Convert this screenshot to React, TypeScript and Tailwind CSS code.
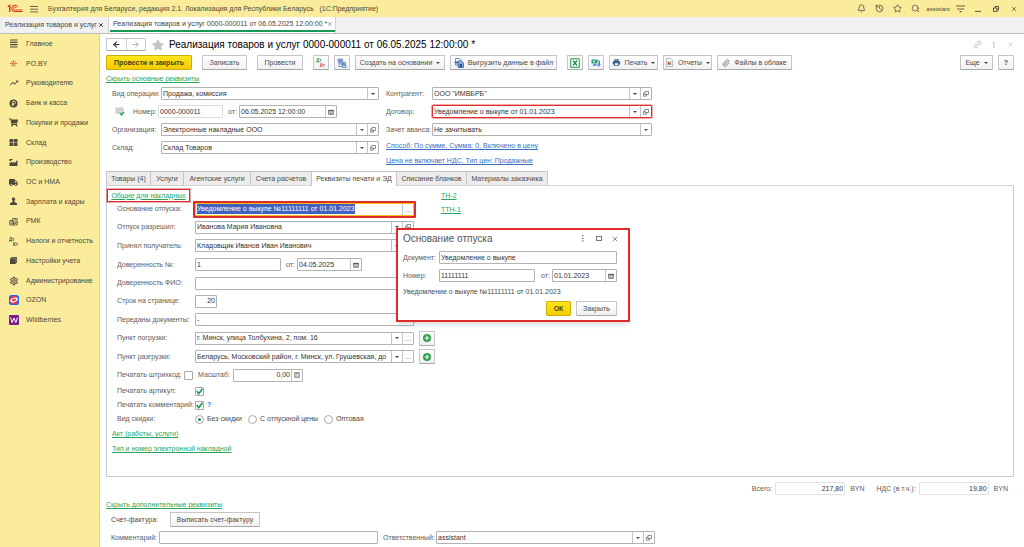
import { useEffect, useId, useRef } from "react";
import type { ReactNode } from "react";
import { ArrowLeft, ArrowRight, Bell, History, Link2, Paperclip, Search, Star, X } from "lucide-react";
import { FaShoppingCart, FaStar, FaTruck } from "react-icons/fa";
import { MdOutlineSettings, MdPrint, MdTrendingUp } from "react-icons/md";

/* ---------- icons ---------- */

const LogoIcon = () => (
  <svg viewBox="0 0 32 18" className="h-[9px] w-4" fill="none" stroke="#d9291c">
    <path d="M1.500 5.500L5.500 3V16" strokeWidth="2.600" />
    <path d="M21.500 6.500A6.300 6.300 0 1 0 16 15H31" strokeWidth="2" />
    <path d="M18.500 8A3 3 0 1 0 16 11.800H31" strokeWidth="1.600" />
  </svg>
);

const LinesIcon = () => (
  <svg viewBox="0 0 9 9" className="size-[9px]" fill="#4d4a3c">
    <path d="M1 0.5h7.5v1.1H1zM1 2.8h7.5v1.1H1zM1 5.1h7.5v1.1H1zM1 7.4h7.5v1.1H1z" />
  </svg>
);

const SparkIcon = () => (
  <svg viewBox="0 0 18 18" className="size-[9px]" stroke="#e4573d" strokeWidth="1.600" fill="#e4573d">
    <path d="M9 7V2M9 11v5M7 9H1.500M11 9h5.500M7.500 7.500L4 4M10.500 7.500L14 4M7.500 10.500L4 14M10.500 10.500L14 14" />
    <circle cx="9" cy="9" r="1.200" />
  </svg>
);

const RubleIcon = () => (
  <svg viewBox="0 0 18 18" className="size-[9px]">
    <circle cx="9" cy="9" r="8" fill="#4d4a3c" />
    <path d="M7.5 14V4.5h2.7a2.6 2.6 0 0 1 0 5.3H5.5M5.5 12h4.5" stroke="#faec9b" strokeWidth="1.6" fill="none" />
  </svg>
);

const BoxesIcon = () => (
  <svg viewBox="0 0 18 18" className="size-[9px]" fill="#4d4a3c">
    <path d="M1 2h7.4v6.4H1zM9.6 2H17v6.4H9.6zM1 9.6h7.4V16H1zM9.6 9.6H17V16H9.6z" />
  </svg>
);

const PlantIcon = () => (
  <svg viewBox="0 0 18 18" className="size-[9px]" fill="#4d4a3c">
    <path d="M1 16V10l5-3v3l5-3v3l3-2 1-3h2v11z" />
    <path d="M1 2h6v1.800H4.500V6H1z" />
  </svg>
);

const PersonIcon = () => (
  <svg viewBox="0 0 18 18" className="size-[9px]" fill="#4d4a3c">
    <path d="M9 1a3.400 3.400 0 0 1 2 6.200V10l5 2.600V16H2v-3.400L7 10V7.200A3.400 3.400 0 0 1 9 1z" />
  </svg>
);

const CashIcon = () => (
  <svg viewBox="0 0 18 18" className="size-[9px]" fill="none" stroke="#4d4a3c" strokeWidth="1.600">
    <path d="M1.500 7h7v9h-7zM8.500 10h8v6h-8zM7 7V3h9v7" />
    <path d="M3 9.500h4M3 12.500h4M10 5.500h4M10.500 13h4" />
  </svg>
);

const DebitIcon = ({ top, bottom }: { top: string; bottom: string }) => (
  <svg viewBox="0 0 20 18" className="h-[9px] w-[10px]">
    <text x="0" y="8" fontSize="9" fontFamily="Liberation Sans" fontWeight="bold" fill={top}>Дт</text>
    <text x="8" y="17" fontSize="9" fontFamily="Liberation Sans" fontWeight="bold" fill={bottom}>Кт</text>
  </svg>
);

const BooksIcon = () => (
  <svg viewBox="0 0 18 18" className="size-[9px]">
    <path d="M2 5l3-3h11v11l-3 3H2z" fill="#4d4a3c" />
    <path d="M3 5.500h10.500v10M5 3.700h10.300V14" stroke="#b8ad76" strokeWidth="0.700" fill="none" />
  </svg>
);

const OzonIcon = () => (
  <svg viewBox="0 0 20 20" className="size-[10px]">
    <rect width="20" height="20" rx="5" fill="#1466f0" />
    <circle cx="10" cy="10" r="8.500" fill="#f4364c" />
    <ellipse cx="10" cy="10" rx="8" ry="4" fill="#fff" transform="rotate(-20 10 10)" />
    <ellipse cx="10" cy="10" rx="4.500" ry="1.900" fill="#e0203c" transform="rotate(-20 10 10)" />
  </svg>
);

const WildberriesIcon = () => (
  <svg viewBox="0 0 20 20" className="size-[10px]">
    <rect width="20" height="20" rx="2" fill="#7a1c8c" />
    <path d="M3 5l3.300 10L10 6l3.700 9L17 5" stroke="#fff" strokeWidth="2" fill="none" />
  </svg>
);

const Caret = () => (
  <svg viewBox="0 0 8 4" className="h-[2px] w-1 shrink-0" fill="#444">
    <path d="M0 0h8L4 4z" />
  </svg>
);

const OpenIcon = () => (
  <svg viewBox="0 0 14 14" className="size-[6px]" fill="none" stroke="#555" strokeWidth="1.600">
    <path d="M4.500 1h8.500v7H4.500zM4.500 5H1v7h7V8" />
  </svg>
);

const CalendarIcon = () => (
  <svg viewBox="0 0 14 14" className="size-[6px]" fill="none" stroke="#555">
    <path d="M1.500 3h11v9.500h-11z" strokeWidth="1.800" />
    <path d="M1 4h12" strokeWidth="3" />
    <path d="M3 8h8M3 10.500h8M5 6v6M9 6v6" strokeWidth="0.700" />
  </svg>
);

const CalcIcon = () => (
  <svg viewBox="0 0 14 14" className="size-[6px]" fill="none" stroke="#666">
    <path d="M1.500 1h11v12h-11z" strokeWidth="1.600" />
    <path d="M3 4h8" strokeWidth="2" />
    <path d="M3 7.500h8M3 10.500h8" strokeWidth="1.500" strokeDasharray="2 1" />
  </svg>
);

const StructureIcon = () => (
  <svg viewBox="0 0 20 20" className="size-[10px]" fill="#dbe8f6" stroke="#3f74b5" strokeWidth="1.500">
    <path d="M2 2h9v5H2zM8 8.500h9v4.500H8zM11 14.500h7V19h-7z" />
    <path d="M4 7v10h7M4 10.500h4" fill="none" />
    <path d="M4 4.500h5M10 10.700h5" stroke="#24508c" />
  </svg>
);

const UploadIcon = () => (
  <svg viewBox="0 0 20 20" className="size-[10px]">
    <path d="M3 1h8l3 3v10H3z" fill="#fff" stroke="#3f6fae" strokeWidth="1.500" />
    <path d="M8 6h7l4 4v9H8z" fill="#8fb4e0" stroke="#2d5c9c" strokeWidth="1.500" />
    <path d="M1 9h7M5 6l3 3-3 3" stroke="#2d5c9c" strokeWidth="1.800" fill="none" />
    <path d="M11 12h5v6h-5z" fill="#24508c" />
  </svg>
);

const ExcelIcon = () => (
  <svg viewBox="0 0 20 20" className="size-[10px]">
    <path d="M1.500 1.500h17v17h-17z" fill="#fff" stroke="#21904a" strokeWidth="2" />
    <path d="M6 5l8 10M14 5L6 15" stroke="#21904a" strokeWidth="2.600" />
  </svg>
);

const ExchangeIcon = () => (
  <svg viewBox="0 0 20 20" className="size-[10px]">
    <path d="M1 3h12v8H1z" fill="#2fa37c" />
    <circle cx="6" cy="7" r="2" fill="#c9efe0" />
    <path d="M13 6h4v8M8 14h10M15 10.500l3.500 3.500-3.500 3.500" stroke="#3478cf" strokeWidth="2" fill="none" />
    <path d="M4 12h5v4H4z" fill="#5b95dd" />
  </svg>
);

const ReportIcon = () => (
  <svg viewBox="0 0 20 20" className="size-[9px]">
    <path d="M3 1h10l4 4v14H3z" fill="#fff" stroke="#8b99a8" strokeWidth="1.500" />
    <path d="M6 8h3v7H6z" fill="#d8433a" />
    <path d="M9 10h3v5H9z" fill="#d8433a" />
    <path d="M12 7h2v8h-2z" fill="#3fa552" />
  </svg>
);

const PostedIcon = () => (
  <svg viewBox="0 0 20 18" className="h-[9px] w-[10px] shrink-0" fill="none">
    <path d="M2 2h14v10H2z" fill="#f4f4f4" stroke="#9a9a9a" strokeWidth="1.300" />
    <path d="M4 5h10M4 7.500h10M4 10h6" stroke="#9a9a9a" />
    <path d="M10 12l3 4 5-6" stroke="#28a04a" strokeWidth="2.600" />
  </svg>
);

/* ---------- controls ---------- */

type Adorn = "drop" | "open" | "calendar" | "calc" | "dots";

const adornIcon: Record<Adorn, ReactNode> = {
  drop: <Caret />,
  open: <OpenIcon />,
  calendar: <CalendarIcon />,
  calc: <CalcIcon />,
  dots: <span className="leading-none text-[#777]">...</span>,
};

const adornName: Record<Adorn, string> = {
  drop: "Выбрать из списка",
  open: "Открыть",
  calendar: "Календарь",
  calc: "Калькулятор",
  dots: "Выбрать",
};

type FieldProps = {
  label: string;
  value: string;
  labelClass?: string;
  boxClass: string;
  border?: string;
  adorns?: Adorn[];
  right?: boolean;
  selected?: boolean;
  readOnly?: boolean;
};

function Field({ label, value, labelClass = "", boxClass, border = "border border-[#b3b3b3] bg-white", adorns = [], right, selected, readOnly }: FieldProps) {
  const id = useId();
  const ref = useRef<HTMLInputElement>(null);
  useEffect(() => {
    if (selected) {
      ref.current?.focus();
      ref.current?.select();
    }
  }, [selected]);
  return (
    <>
      <label htmlFor={id} className={`shrink-0 whitespace-nowrap text-[#5c5c5c] ${labelClass}`}>{label}</label>
      <div className={`flex h-[13px] shrink-0 rounded-[1px] ${border} ${boxClass}`}>
        <input
          id={id}
          ref={ref}
          defaultValue={value}
          readOnly={readOnly}
          className={`min-w-0 flex-1 bg-white px-px text-[#333] outline-none selection:bg-[#3f62c0] selection:text-white ${right ? "text-right" : ""}`}
        />
        {adorns.map((a) => (
          <button key={a} type="button" aria-label={adornName[a]} className="flex w-[11px] items-center justify-center border-l border-[#c4c4c4] bg-white">
            {adornIcon[a]}
          </button>
        ))}
      </div>
    </>
  );
}

function Btn({ children, className = "", label }: { children: ReactNode; className?: string; label?: string }) {
  return (
    <button
      type="button"
      aria-label={label}
      className={`flex h-[15px] shrink-0 items-center justify-center gap-1 whitespace-nowrap rounded-[1px] border border-[#c6c6c6] border-b-[#a9a9a9] bg-linear-to-b from-white to-[#f1f1f1] text-[#4a4a4a] ${className}`}
    >
      {children}
    </button>
  );
}

const yellow = "border-[#d0ae00]! bg-linear-to-b from-[#ffe51f]! to-[#f2cd00]! font-bold text-[#4a4210]!";

function GreenLink({ children, className = "" }: { children: ReactNode; className?: string }) {
  return <a href="#" className={`whitespace-nowrap text-[#2aa55b] underline ${className}`}>{children}</a>;
}

function Check({ label, checked }: { label: string; checked?: boolean }) {
  const id = useId();
  return (
    <>
      <label htmlFor={id} className={`shrink-0 whitespace-nowrap text-[#5c5c5c] ${checked ? "w-[78px]" : "w-[67px]"}`}>{label}</label>
      <span className={`relative flex size-[9px] shrink-0 ${checked ? "" : "mr-[2px]"}`}>
        <input id={id} type="checkbox" defaultChecked={checked} className="peer size-[9px] appearance-none rounded-[1px] border border-[#a8a8a8] bg-white" />
        <svg viewBox="0 0 18 18" className="pointer-events-none absolute inset-0 hidden size-[9px] peer-checked:block" fill="none" stroke="#0b9a45" strokeWidth="3">
          <path d="M3.500 8l4 5.500L15 3.500" />
        </svg>
      </span>
    </>
  );
}

function Radio({ label, checked }: { label: string; checked?: boolean }) {
  return (
    <label className="flex items-center gap-[3px] whitespace-nowrap text-[#4a4a4a]">
      <input type="radio" name="discount" defaultChecked={checked} className="size-[9px] appearance-none rounded-full border border-[#a8a8a8] bg-white bg-clip-content p-[2px] checked:bg-[#16984a]" />
      {label}
    </label>
  );
}

function AddButton() {
  return (
    <Btn label="Добавить" className="ml-[5px] w-4">
      <svg viewBox="0 0 16 16" className="size-[8px]">
        <circle cx="8" cy="8" r="8" fill="#2fa14c" />
        <path d="M8 3.500v9M3.500 8h9" stroke="#fff" strokeWidth="2.200" />
      </svg>
    </Btn>
  );
}

/* ---------- page ---------- */

const dark = "size-[10px] text-[#4d4a3c]";

const menu: { name: string; icon: ReactNode }[] = [
  { name: "Главное", icon: <LinesIcon /> },
  { name: "PO.BY", icon: <SparkIcon /> },
  { name: "Руководителю", icon: <MdTrendingUp className={dark} /> },
  { name: "Банк и касса", icon: <RubleIcon /> },
  { name: "Покупки и продажи", icon: <FaShoppingCart className="size-[9px] text-[#4d4a3c]" /> },
  { name: "Склад", icon: <BoxesIcon /> },
  { name: "Производство", icon: <PlantIcon /> },
  { name: "ОС и НМА", icon: <FaTruck className="size-[9px] text-[#4d4a3c]" /> },
  { name: "Зарплата и кадры", icon: <PersonIcon /> },
  { name: "РМК", icon: <CashIcon /> },
  { name: "Налоги и отчетность", icon: <DebitIcon top="#4d4a3c" bottom="#4d4a3c" /> },
  { name: "Настройки учета", icon: <BooksIcon /> },
  { name: "Администрирование", icon: <MdOutlineSettings className={dark} /> },
  { name: "OZON", icon: <OzonIcon /> },
  { name: "Wildberries", icon: <WildberriesIcon /> },
];

const tabs = [
  { name: "Товары (4)", width: "w-[45px]" },
  { name: "Услуги", width: "w-[33px]" },
  { name: "Агентские услуги", width: "w-[67px]" },
  { name: "Счета расчетов", width: "w-[61px]" },
  { name: "Реквизиты печати и ЭД", width: "w-[85px]", active: true },
  { name: "Списание бланков", width: "w-[70px]" },
  { name: "Материалы заказчика", width: "w-[81px]" },
];

function TitleBar() {
  return (
    <header className="flex h-[17px] items-center bg-[#faec9b] pl-[7px] pr-[6px] text-[#4b4837]">
      <LogoIcon />
      <svg viewBox="0 0 8 8" className="ml-[7px] size-2" stroke="#5a563f" strokeWidth="0.900">
        <path d="M0 1.500h8M0 4.200h8M0 6.900h8" />
      </svg>
      <span className="ml-[10px] flex-1 truncate">
        Бухгалтерия для Беларуси, редакция 2.1. Локализация для Республики Беларусь &nbsp; (1С:Предприятие)
      </span>
      <div className="flex items-center gap-[9px]">
        <Bell className="size-[9px]" strokeWidth={2} />
        <History className="size-[9px]" strokeWidth={2} />
        <Star className="size-[9px]" strokeWidth={2} />
        <Search className="size-[9px]" strokeWidth={2} />
      </div>
      <span className="ml-[6px] text-[6px]">assistant</span>
      <svg viewBox="0 0 18 16" className="ml-[6px] h-2 w-[9px]" fill="none" stroke="#4b4837" strokeWidth="1.700">
        <path d="M0 2h18M2 8h14" />
        <path d="M6 12h6l-3 3z" fill="#4b4837" stroke="none" />
      </svg>
      <svg viewBox="0 0 10 10" className="ml-[10px] size-[6px]" stroke="#4b4837" strokeWidth="1.500">
        <path d="M0 9h10" />
      </svg>
      <svg viewBox="0 0 12 12" className="ml-[12px] size-[6px]" stroke="#4b4837" strokeWidth="1.800" fill="none">
        <path d="M1 4h7v7H1zM4 4V1h7v7H8" />
      </svg>
      <X className="ml-[11px] size-[8px]" strokeWidth={2} />
    </header>
  );
}

function WindowTabs() {
  return (
    <nav className="flex h-[17px] whitespace-nowrap border-b border-[#bdbdbd] bg-[#f1f1f1] text-[#454545]">
      <a href="#" className="flex w-[109px] items-center justify-between border-r border-[#d0d0d0] pl-[5px] pr-[4px]">
        Реализация товаров и услуг
        <X className="size-[6px]" strokeWidth={4} />
      </a>
      <a href="#" className="flex w-[227px] border-r border-[#d0d0d0] bg-white px-px pb-px">
        <span className="flex flex-1 items-center justify-between border-b-2 border-[#179a55] pl-[3px] pr-[2px]">
          Реализация товаров и услуг 0000-000011 от 06.05.2025 12:00:00 *
          <X className="size-[6px] text-[#888]" strokeWidth={3} />
        </span>
      </a>
    </nav>
  );
}

function Sidebar() {
  return (
    <aside className="w-[100px] shrink-0 border-r border-[#d8d2a4] bg-[#faec9b]">
      <ul className="flex h-[296px] flex-col">
        {menu.map((m) => (
          <li key={m.name} className="flex-1">
            <a href="#" className="flex h-full items-center gap-[7px] whitespace-nowrap pl-2 text-[#4b4837]">
              <span className="flex w-[11px] justify-center">{m.icon}</span>
              {m.name}
            </a>
          </li>
        ))}
      </ul>
    </aside>
  );
}

function DocumentHeader() {
  return (
    <div className="flex h-[21px] items-center">
      <div className="flex h-[13px] w-10 rounded-[1px] border border-[#c6c6c6] border-b-[#a9a9a9]">
        <button type="button" aria-label="Назад" className="flex flex-1 items-center justify-center border-r border-[#d0d0d0]">
          <ArrowLeft className="size-[9px] text-[#333]" strokeWidth={3} />
        </button>
        <button type="button" aria-label="Вперед" className="flex flex-1 items-center justify-center">
          <ArrowRight className="size-[9px] text-[#999]" strokeWidth={2} />
        </button>
      </div>
      <FaStar className="ml-[6px] size-3 text-[#c4c4c4]" />
      <h1 className="ml-[5px] flex-1 truncate text-[10px] leading-4 text-black">
        Реализация товаров и услуг 0000-000011 от 06.05.2025 12:00:00 *
      </h1>
      <Link2 className="size-[9px] -rotate-45 text-[#aaa]" />
      <svg viewBox="0 0 2 8" className="ml-[11px] h-[6px] w-[2px]" fill="#999">
        <path d="M0 0h1.500v1.500H0zM0 3h1.500v1.500H0zM0 6h1.500v1.500H0z" />
      </svg>
      <X className="ml-[12px] size-[7px] text-[#aaa]" />
    </div>
  );
}

function Toolbar() {
  return (
    <div className="flex h-[15px] items-center gap-[5px]">
      <Btn className={`w-[86px] ${yellow}`}>Провести и закрыть</Btn>
      <Btn className="ml-[5px] w-[45px]">Записать</Btn>
      <Btn className="ml-[5px] w-[46px]">Провести</Btn>
      <Btn label="Проводки" className="ml-[5px] w-4"><DebitIcon top="#2c9b56" bottom="#d23c34" /></Btn>
      <Btn label="Структура" className="w-4"><StructureIcon /></Btn>
      <Btn className="w-[90px]">Создать на основании <Caret /></Btn>
      <Btn className="w-[107px]"><UploadIcon />Выгрузить данные в файл</Btn>
      <Btn label="Excel" className="ml-[5px] w-4"><ExcelIcon /></Btn>
      <Btn label="Обмен" className="w-4"><ExchangeIcon /></Btn>
      <Btn className="w-[49px]"><MdPrint className="size-[9px] text-[#3c6087]" />Печать <Caret /></Btn>
      <Btn className="w-[49px]"><ReportIcon />Отчеты <Caret /></Btn>
      <Btn className="w-[75px]"><Paperclip className="size-[8px] text-[#666]" />Файлы в облаке</Btn>
      <Btn className="ml-auto w-[33px]">Еще <Caret /></Btn>
      <Btn className="w-4 font-bold">?</Btn>
    </div>
  );
}

function MainFields() {
  const lbl = "w-[49px]";
  const right = "w-[46px]";
  return (
    <div className="flex gap-[7px] pl-[6px] pt-[3px]">
      <div className="flex flex-col gap-[5px]">
        <div className="flex items-center">
          <Field label="Вид операции:" value="Продажа, комиссия" labelClass={lbl} boxClass="w-[218px]" adorns={["drop"]} />
        </div>
        <div className="flex items-center">
          <span className="w-[21px] pl-[3px]"><PostedIcon /></span>
          <Field label="Номер:" value="0000-000011" labelClass="w-[25px]" boxClass="w-[65px]" border="border border-[#dedede]" readOnly />
          <Field label="от:" value="06.05.2025 12:00:00" labelClass="w-4 pl-[5px]" boxClass="w-[98px]" adorns={["calendar"]} />
        </div>
        <div className="flex items-center">
          <Field label="Организация:" value="Электронные накладные ООО" labelClass={lbl} boxClass="w-[218px]" adorns={["drop", "open"]} />
        </div>
        <div className="flex items-center">
          <Field label="Склад:" value="Склад Товаров" labelClass={lbl} boxClass="w-[218px]" adorns={["drop", "open"]} />
        </div>
      </div>
      <div className="flex flex-col gap-[5px]">
        <div className="flex items-center">
          <Field label="Контрагент:" value={'ООО "ИМВБРБ"'} labelClass={right} boxClass="w-[220px]" adorns={["drop", "open"]} />
        </div>
        <div className="flex items-center">
          <Field label="Договор:" value="Уведомление о выкупе от 01.01.2023" labelClass={right} boxClass="w-[220px]" border="border border-[#e02b2b] outline outline-[#e02b2b]/40" adorns={["drop", "open"]} />
        </div>
        <div className="flex items-center">
          <Field label="Зачет аванса:" value="Не зачитывать" labelClass={right} boxClass="w-[220px]" adorns={["drop"]} />
        </div>
        <a href="#" className="self-start text-[#3a6fc0] underline">Способ: По сумме, Сумма: 0, Включено в цену</a>
        <a href="#" className="self-start text-[#3a6fc0] underline">Цена не включает НДС, Тип цен: Продажные</a>
      </div>
    </div>
  );
}

function Dialog() {
  return (
    <section
      role="dialog"
      aria-label="Основание отпуска"
      className="absolute left-[289px] top-[42px] flex w-[234px] flex-col gap-[5px] border-2 border-[#e02b2b] bg-white px-[5px] pb-1 shadow-md"
    >
      <div className="flex h-4 items-center pt-px text-[#555]">
        <h2 className="flex-1 text-[10px]">Основание отпуска</h2>
        <svg viewBox="0 0 2 8" className="h-[7px] w-[2px]" fill="#666">
          <path d="M0 0h1.500v1.500H0zM0 3h1.500v1.500H0zM0 6h1.500v1.500H0z" />
        </svg>
        <span className="ml-3 h-[5px] w-[6px] border border-[#777]" />
        <X className="ml-[9px] mr-[4px] size-[8px]" />
      </div>
      <div className="flex items-center">
        <Field label="Документ:" value="Уведомление о выкупе" labelClass="w-9" boxClass="w-[178px]" />
      </div>
      <div className="flex items-center">
        <Field label="Номер:" value="11111111" labelClass="w-9" boxClass="w-[96px]" />
        <Field label="от:" value="01.01.2023" labelClass="w-[17px] pl-[6px]" boxClass="w-[65px]" adorns={["calendar"]} />
      </div>
      <p className="leading-[9px] text-[#4a4a4a]">Уведомление о выкупе №11111111 от 01.01.2023</p>
      <div className="flex justify-end gap-[5px] pr-[6px]">
        <Btn className={`w-[25px] ${yellow}`}>ОК</Btn>
        <Btn className="w-[41px]">Закрыть</Btn>
      </div>
    </section>
  );
}

function PrintPanel() {
  const lbl = "w-[78px]";
  const row = "flex h-[18px] items-center";
  const tall = "flex h-[19px] items-center";
  return (
    <div className="relative h-[291px] border border-t-0 border-[#c9c9c9]">
      <div className="flex h-[16px] items-end">
        <div className="flex h-[13px] w-[83px] items-center justify-center border border-[#e02b2b] outline outline-[#e02b2b]/40">
          <GreenLink>Общие для накладных</GreenLink>
        </div>
        <GreenLink className="ml-[251px] pb-px">ТН-2</GreenLink>
      </div>
      <div className="-mt-[2px] flex">
        <div className="flex flex-col pl-[10px]">
          <div className={row}>
            <Field
              label="Основание отпуска:"
              value="Уведомление о выкупе №11111111 от 01.01.2023"
              labelClass="w-[76px]"
              boxClass="h-[17px]! w-[223px] p-px"
              border="border-2 border-[#e02b2b] bg-[#f7bd1b]"
              adorns={["dots"]}
              selected
            />
          </div>
          <div className={row}>
            <Field label="Отпуск разрешил:" value="Иванова Мария Ивановна" labelClass={lbl} boxClass="w-[219px]" adorns={["drop", "open"]} />
          </div>
          <div className={tall}>
            <Field label="Принял получатель:" value="Кладовщик Иванов Иван Иванович" labelClass={lbl} boxClass="w-[219px]" adorns={["drop", "open"]} />
          </div>
          <div className={tall}>
            <Field label="Доверенность №:" value="1" labelClass={lbl} boxClass="w-[86px]" />
            <Field label="от:" value="04.05.2025" labelClass="w-4 pl-[5px]" boxClass="w-[65px]" adorns={["calendar"]} />
          </div>
          <div className={row}>
            <Field label="Доверенность ФИО:" value="" labelClass={lbl} boxClass="w-[219px]" />
          </div>
          <div className={row}>
            <Field label="Строк на странице:" value="20" labelClass={lbl} boxClass="w-[22px]" right />
          </div>
          <div className={tall}>
            <Field label="Переданы документы:" value="-" labelClass={lbl} boxClass="w-[219px]" />
          </div>
          <div className={row}>
            <Field label="Пункт погрузки:" value="г. Минск, улица Толбухина, 2, пом. 16" labelClass={lbl} boxClass="w-[219px]" adorns={["drop", "dots"]} />
            <AddButton />
          </div>
          <div className={tall}>
            <Field label="Пункт разгрузки:" value="Беларусь, Московский район, г. Минск, ул. Грушевская, до" labelClass={lbl} boxClass="w-[219px]" adorns={["drop", "dots"]} />
            <AddButton />
          </div>
          <div className={row}>
            <Check label="Печатать штрихкод:" />
            <Field label="Масштаб:" value="0,00" labelClass="w-[38px] pl-[3px]" boxClass="w-[70px]" adorns={["calc"]} right />
          </div>
          <div className="flex h-[14px] items-center">
            <Check label="Печатать артикул:" checked />
          </div>
          <div className="flex h-[14px] items-center">
            <Check label="Печатать комментарий:" checked />
            <button type="button" aria-label="Справка" className="ml-[3px] font-bold text-[#3a7fd0]">?</button>
          </div>
          <div role="radiogroup" aria-label="Вид скидки" className="flex h-[14px] items-center gap-[6px]">
            <span className="w-[72px] text-[#5c5c5c]">Вид скидки:</span>
            <Radio label="Без скидки" checked />
            <Radio label="С отпускной цены" />
            <Radio label="Оптовая" />
          </div>
        </div>
        <GreenLink className="ml-[6px] pt-[5px]">ТТН-1</GreenLink>
      </div>
      <div className="flex flex-col items-start pl-[5px]">
        <GreenLink className="leading-[15px]">Акт (работы, услуги)</GreenLink>
        <GreenLink className="leading-[15px]">Тип и номер электронной накладной</GreenLink>
      </div>
      <Dialog />
    </div>
  );
}

export default function App() {
  return (
    <div className="flex min-h-screen flex-col bg-white font-['Liberation_Sans',Arial,sans-serif] text-[7px] leading-[10px]">
      <TitleBar />
      <WindowTabs />
      <div className="flex flex-1">
        <Sidebar />
        <main className="flex min-w-0 flex-1 flex-col pl-[6px] pr-[10px]">
          <DocumentHeader />
          <Toolbar />
          <div className="flex h-[14px] items-end">
            <GreenLink>Скрыть основные реквизиты</GreenLink>
          </div>
          <MainFields />
          <div role="tablist" className="mt-[5px] flex h-[15px] shrink-0 border-b border-[#d4d4d4]">
            {tabs.map((t) => (
              <button
                key={t.name}
                type="button"
                role="tab"
                aria-selected={!!t.active}
                className={`shrink-0 whitespace-nowrap border-r border-t border-[#c4c4c4] text-[#4a4a4a] first:border-l ${t.width} ${t.active ? "-mb-px bg-white" : "bg-[#ececec]"}`}
              >
                {t.name}
              </button>
            ))}
          </div>
          <PrintPanel />
          <div className="mt-[5px] flex items-center justify-end pr-[6px] text-[#5c5c5c]">
            <Field label="Всего:" value="217,80" labelClass="mr-[3px]" boxClass="w-[70px]" border="border border-[#e2e2e2]" right readOnly />
            <span className="ml-[5px]">BYN</span>
            <Field label="НДС (в т.ч.):" value="19,80" labelClass="ml-3 mr-[3px]" boxClass="w-[70px]" border="border border-[#e2e2e2]" right readOnly />
            <span className="ml-[5px]">BYN</span>
          </div>
          <div className="mt-[5px] flex">
            <GreenLink>Скрыть дополнительные реквизиты</GreenLink>
          </div>
          <div className="flex items-center pl-[5px] pt-[2px]">
            <span className="w-[59px] text-[#4a4a4a]">Счет-фактура:</span>
            <Btn className="w-[90px]">Выписать счет-фактуру</Btn>
          </div>
          <div className="flex items-center pl-[5px] pt-[4px]">
            <Field label="Комментарий:" value="" labelClass="w-12" boxClass="w-[219px]" />
            <Field label="Ответственный:" value="assistant" labelClass="w-[58px] pl-[5px]" boxClass="w-[219px]" adorns={["drop", "open"]} />
          </div>
        </main>
      </div>
    </div>
  );
}
